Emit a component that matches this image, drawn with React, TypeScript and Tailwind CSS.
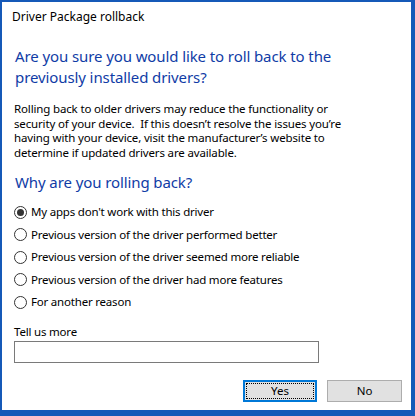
import React from "react";

const font = { fontFamily: '"Segoe UI", "Noto Sans", sans-serif' };

function Radio({ checked, label }: { checked?: boolean; label: string }) {
  return (
    <div className="flex h-[22.5px] items-center">
      <div className="flex h-[13px] w-[13px] shrink-0 items-center justify-center rounded-full border border-[#333333] bg-white">
        {checked && <div className="h-[7px] w-[7px] rounded-full bg-[#333333]" />}
      </div>
      <span className="ml-[4px] whitespace-nowrap text-[11.5px] leading-[16px] tracking-[-0.2px] text-black">{label}</span>
    </div>
  );
}

export default function App() {
  return (
    <div className="h-[416px] w-[415px] bg-[#1559b8] pl-[2px] pr-[4px] pt-[2px] pb-[6px]" style={font}>
      <div className="flex h-full w-full flex-col bg-white">
        <div className="ml-[10px] mt-[7px] whitespace-nowrap text-[12px] leading-[16px] text-black">Driver Package rollback</div>
        <div className="ml-[13px] mt-[21px] whitespace-nowrap text-[15px] leading-[21px] tracking-[-0.1px] text-[#103ca6]">
          Are you sure you would like to roll back to the
          <br />
          previously installed drivers?
        </div>
        <div className="ml-[12px] mt-[14px] whitespace-pre text-[11.5px] leading-[14.5px] tracking-[-0.15px] text-black">
          {"Rolling back to older drivers may reduce the functionality or\nsecurity of your device.  If this doesn\u2019t resolve the issues you\u2019re\nhaving with your device, visit the manufacturer\u2019s website to\ndetermine if updated drivers are available."}
        </div>
        <div className="ml-[13px] mt-[12px] whitespace-nowrap text-[15px] leading-[21px] tracking-[-0.1px] text-[#103ca6]">Why are you rolling back?</div>
        <div className="ml-[12px] mt-[8px] flex flex-col">
          <Radio checked label="My apps don't work with this driver" />
          <Radio label="Previous version of the driver performed better" />
          <Radio label="Previous version of the driver seemed more reliable" />
          <Radio label="Previous version of the driver had more features" />
          <Radio label="For another reason" />
        </div>
        <div className="ml-[12px] mt-[10px] text-[11.5px] leading-[16px] tracking-[-0.2px] text-black">Tell us more</div>
        <div className="ml-[12px] mt-[1px] h-[22px] w-[305px] border border-[#7a7a7a] bg-white" />
        <div className="mr-[9px] mt-[17px] flex justify-end gap-[10px]">
          <div className="flex h-[22px] w-[74px] items-center justify-center border-2 border-[#0078d7] bg-[#e1e1e1] p-[1px]">
            <div className="flex h-full w-full items-center justify-center border border-dotted border-black text-[11.5px] leading-[16px] text-black">Yes</div>
          </div>
          <div className="flex h-[22px] w-[75px] items-center justify-center border border-[#adadad] bg-[#e1e1e1] text-[11.5px] leading-[16px] text-black">No</div>
        </div>
      </div>
    </div>
  );
}
